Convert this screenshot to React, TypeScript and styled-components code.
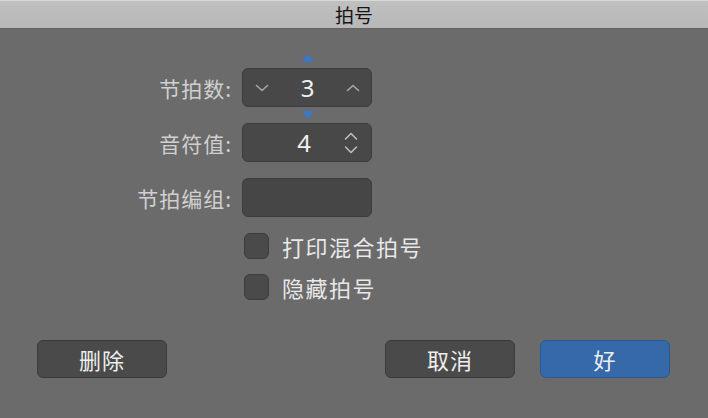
import React from "react";
import styled, { createGlobalStyle, css } from "styled-components";

const GlobalStyle = createGlobalStyle`
  html, body {
    margin: 0;
    padding: 0;
    background: #6b6b6b;
    font-family: "Noto Sans CJK SC", "Noto Sans", sans-serif;
  }
`;

const Window = styled.div`
  width: 708px;
  height: 418px;
  display: flex;
  flex-direction: column;
  background: #6b6b6b;
  overflow: hidden;
`;

const TitleBar = styled.div`
  box-sizing: border-box;
  height: 29px;
  display: flex;
  align-items: center;
  justify-content: center;
  background: linear-gradient(#c0c0c0, #b7b7b7);
  border-top: 1px solid #d8d8d8;
  border-bottom: 1px solid #626262;
  color: #151515;
  font-size: 19px;
`;

const Body = styled.div`
  padding-top: 39px;
  display: flex;
  flex-direction: column;
`;

const Form = styled.div`
  display: grid;
  grid-template-columns: 232px 130px;
  grid-auto-rows: 39px;
  column-gap: 10px;
  row-gap: 16px;
`;

const Label = styled.div`
  justify-self: end;
  align-self: center;
  color: #d0d0d0;
  font-size: 21px;
  letter-spacing: 1px;
  white-space: nowrap;
`;

const field = css`
  box-sizing: border-box;
  height: 100%;
  background: #484848;
  border: 1px solid #3c3c3c;
  border-radius: 6px;
`;

const Stepper = styled.div<{ $stacked?: boolean }>`
  ${field}
  position: relative;
  display: flex;
  align-items: center;
  justify-content: ${(p) => (p.$stacked ? "flex-end" : "space-between")};
  padding: 0 ${(p) => (p.$stacked ? "13px" : "11px")} 0 12px;
`;

const Value = styled.span<{ $stacked?: boolean }>`
  color: #f0f0f0;
  font-family: "Noto Sans", sans-serif;
  font-size: 24px;
  line-height: 1;
  ${(p) =>
    p.$stacked &&
    css`
      margin-right: 33px;
    `}
`;

const Marker = styled.div<{ $side: "top" | "bottom" }>`
  position: absolute;
  left: 59px;
  width: 0;
  height: 0;
  border-left: 6px solid transparent;
  border-right: 6px solid transparent;
  ${(p) =>
    p.$side === "top"
      ? css`
          top: -15px;
          border-bottom: 8px solid #3b78c8;
        `
      : css`
          bottom: -13px;
          border-top: 8px solid #3b78c8;
        `}
`;

const Box = styled.div`
  ${field}
  background: #464646;
`;

const Checks = styled.div`
  margin: 16px 0 0 244px;
  display: flex;
  flex-direction: column;
  gap: 15px;
`;

const CheckRow = styled.label`
  display: flex;
  align-items: center;
  gap: 13px;
  height: 26px;
  color: #e8e8e8;
  font-size: 22px;
  letter-spacing: 1.5px;
`;

const CheckBox = styled.span`
  box-sizing: border-box;
  width: 25px;
  height: 26px;
  background: #4a4a4a;
  border: 1px solid #3c3c3c;
  border-radius: 6px;
`;

const Footer = styled.div`
  margin-top: 40px;
  padding: 0 38px 0 37px;
  display: flex;
  align-items: center;
  gap: 25px;
`;

const Spacer = styled.div`
  flex: 1;
`;

const Button = styled.button<{ $primary?: boolean }>`
  box-sizing: border-box;
  width: 130px;
  height: 38px;
  padding: 0;
  border-radius: 6px;
  border: 1px solid ${(p) => (p.$primary ? "#2a5a92" : "#3a3a3a")};
  background: ${(p) => (p.$primary ? "#3569a9" : "#4a4a4a")};
  color: #eeeeee;
  font-family: inherit;
  font-size: 22px;
  letter-spacing: 1px;
`;

const Chevron = ({ up }: { up?: boolean }) => (
  <svg width="14" height="8" viewBox="0 0 14 8" fill="none">
    <path
      d={up ? "M1.5 6.5 L7 1.5 L12.5 6.5" : "M1.5 1.5 L7 6.5 L12.5 1.5"}
      stroke="#a8a8a8"
      strokeWidth="1.6"
      strokeLinecap="round"
      strokeLinejoin="round"
    />
  </svg>
);

const UpDown = () => (
  <svg width="14" height="22" viewBox="0 0 14 22" fill="none">
    <path
      d="M1.5 7 L7 1.5 L12.5 7 M1.5 15 L7 20.5 L12.5 15"
      stroke="#bdbdbd"
      strokeWidth="1.6"
      strokeLinecap="round"
      strokeLinejoin="round"
    />
  </svg>
);

export default function App() {
  return (
    <Window>
      <GlobalStyle />
      <TitleBar>拍号</TitleBar>
      <Body>
        <Form>
          <Label>节拍数:</Label>
          <Stepper>
            <Marker $side="top" />
            <Chevron />
            <Value>3</Value>
            <Chevron up />
            <Marker $side="bottom" />
          </Stepper>
          <Label>音符值:</Label>
          <Stepper $stacked>
            <Value $stacked>4</Value>
            <UpDown />
          </Stepper>
          <Label>节拍编组:</Label>
          <Box />
        </Form>
        <Checks>
          <CheckRow>
            <CheckBox />
            打印混合拍号
          </CheckRow>
          <CheckRow>
            <CheckBox />
            隐藏拍号
          </CheckRow>
        </Checks>
        <Footer>
          <Button>删除</Button>
          <Spacer />
          <Button>取消</Button>
          <Button $primary>好</Button>
        </Footer>
      </Body>
    </Window>
  );
}
